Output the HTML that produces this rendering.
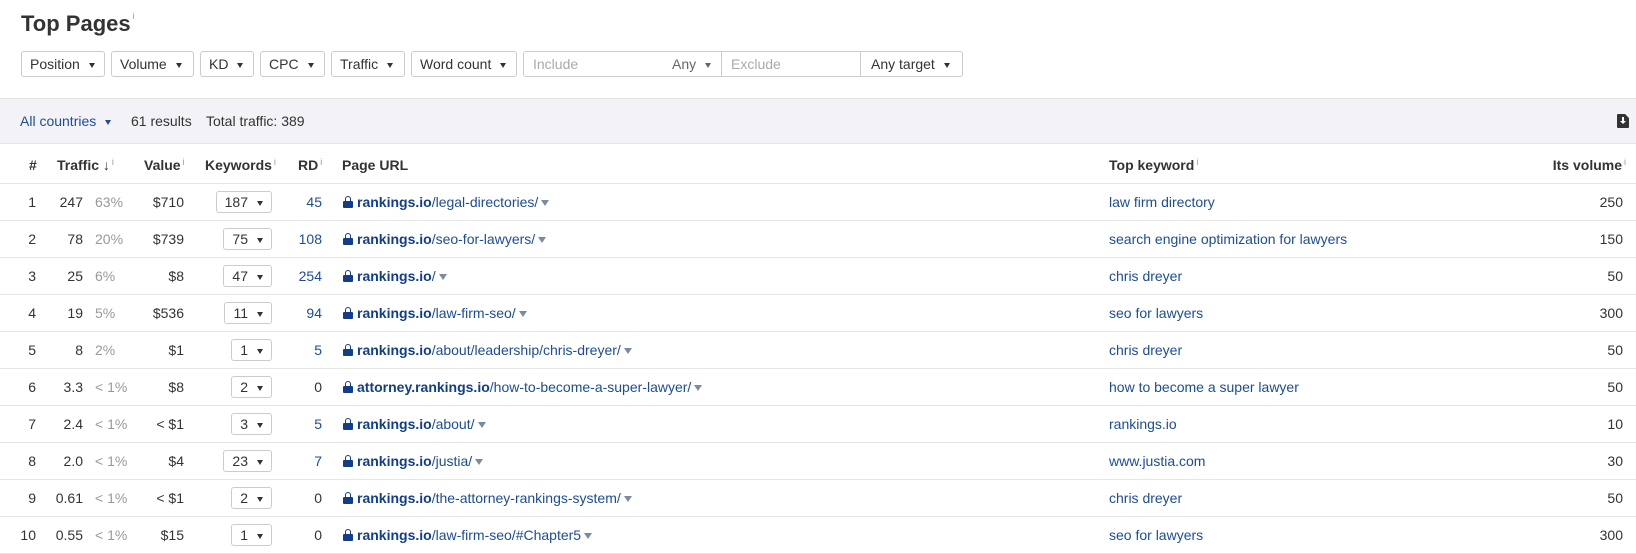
<!DOCTYPE html>
<html><head><meta charset="utf-8"><style>
*{margin:0;padding:0;box-sizing:border-box}
body{width:1636px;height:554px;background:#fff;font-family:"Liberation Sans",Arial,sans-serif;font-size:14px;color:#333;position:relative;overflow:hidden}
.a{position:absolute;white-space:nowrap}
h1{position:absolute;left:21px;top:11px;font-size:22px;font-weight:bold;color:#333}
.i{font-size:9px;color:#999;font-weight:normal;vertical-align:top;margin-left:2px}
.btn{position:absolute;top:51px;height:26px;border:1px solid #ccc;border-radius:3px;line-height:24px;padding-left:8px;color:#333;background:#fff}
.tri{display:inline-block;width:0;height:0;border-left:3.5px solid transparent;border-right:3.5px solid transparent;border-top:5px solid #333;vertical-align:middle;margin-left:9px}
.bar{position:absolute;left:0;right:0;top:98px;height:46px;background:#f3f3f7;border-top:1px solid #e6e6ea;border-bottom:1px solid #e6e6ea}
.hd{font-weight:bold;color:#333;top:157px}
.line{position:absolute;left:0;right:0;height:1px;background:#e5e5e5}
.r{text-align:right}
.blue{color:#1c4c9a}
.gray{color:#999}
.kw{position:absolute;height:22px;border:1px solid #ccc;border-radius:3px;line-height:20px;padding-left:8px;text-align:left;right:1364px}
.kw .tri{margin-left:9px;margin-right:8px;border-top-color:#333}
.url{color:#1c4c9a}
.url b{color:#113d8c}
.lock{display:inline-block;width:10px;height:12px;position:relative;vertical-align:-1px;margin-right:4px}
.lock:before{content:"";position:absolute;left:2px;top:0;width:4px;height:5px;border:1.6px solid #113d8c;border-bottom:none;border-radius:3px 3px 0 0}
.lock:after{content:"";position:absolute;left:0;top:5px;width:10px;height:7px;background:#113d8c;border-radius:1px}
.st{display:inline-block;width:0;height:0;border-left:4px solid transparent;border-right:4px solid transparent;border-top:6px solid #7b8aa3;margin-left:3px;vertical-align:middle}
</style></head><body>
<h1>Top Pages<span class="i">i</span></h1>
<div class="btn" style="left:21px;width:84px">Position<span class="tri"></span></div>
<div class="btn" style="left:111px;width:83px">Volume<span class="tri"></span></div>
<div class="btn" style="left:200px;width:54px">KD<span class="tri"></span></div>
<div class="btn" style="left:260px;width:65px">CPC<span class="tri"></span></div>
<div class="btn" style="left:331px;width:74px">Traffic<span class="tri"></span></div>
<div class="btn" style="left:411px;width:106px">Word count<span class="tri"></span></div>
<div class="btn" style="left:523px;width:440px;padding:0"></div>
<div class="a" style="left:533px;top:56px;color:#aaa">Include</div>
<div class="a" style="left:672px;top:56px;color:#666">Any<span class="tri" style="border-top-color:#666"></span></div>
<div class="a" style="left:721px;top:52px;width:1px;height:24px;background:#ccc"></div>
<div class="a" style="left:731px;top:56px;color:#aaa">Exclude</div>
<div class="a" style="left:860px;top:52px;width:1px;height:24px;background:#ccc"></div>
<div class="a" style="left:871px;top:56px;color:#333">Any target<span class="tri"></span></div>

<div class="bar"></div>
<div class="a blue" style="left:20px;top:113px">All countries<span class="tri" style="border-top-color:#1c4c9a"></span></div>
<div class="a" style="left:131px;top:113px">61 results</div>
<div class="a" style="left:206px;top:113px">Total traffic: 389</div>
<div class="a" style="left:1617px;top:114px;width:12px;height:14px;background:#333;border-radius:1px"><div style="position:absolute;left:5px;top:3px;width:2px;height:5px;background:#fff"></div><div style="position:absolute;left:3px;top:7px;border-left:3px solid transparent;border-right:3px solid transparent;border-top:3px solid #fff"></div><div style="position:absolute;right:0;top:0;border-left:4px solid #333;border-top:4px solid #f3f3f7"></div></div>

<div class="a hd" style="left:29px">#</div>
<div class="a hd" style="left:57px">Traffic ↓<span class="i">i</span></div>
<div class="a hd" style="left:144px">Value<span class="i">i</span></div>
<div class="a hd" style="left:205px">Keywords<span class="i">i</span></div>
<div class="a hd" style="left:298px">RD<span class="i">i</span></div>
<div class="a hd" style="left:342px">Page URL</div>
<div class="a hd" style="left:1109px">Top keyword<span class="i">i</span></div>
<div class="a hd" style="right:10px">Its volume<span class="i">i</span></div>
<div class="line" style="top:183px"></div>
<div id="rows"></div>
<script>
var d=[["1","247","63%","$710","187","45","rankings.io","/legal-directories/","law firm directory","250"],
["2","78","20%","$739","75","108","rankings.io","/seo-for-lawyers/","search engine optimization for lawyers","150"],
["3","25","6%","$8","47","254","rankings.io","/","chris dreyer","50"],
["4","19","5%","$536","11","94","rankings.io","/law-firm-seo/","seo for lawyers","300"],
["5","8","2%","$1","1","5","rankings.io","/about/leadership/chris-dreyer/","chris dreyer","50"],
["6","3.3","&lt; 1%","$8","2","0","attorney.rankings.io","/how-to-become-a-super-lawyer/","how to become a super lawyer","50"],
["7","2.4","&lt; 1%","&lt; $1","3","5","rankings.io","/about/","rankings.io","10"],
["8","2.0","&lt; 1%","$4","23","7","rankings.io","/justia/","www.justia.com","30"],
["9","0.61","&lt; 1%","&lt; $1","2","0","rankings.io","/the-attorney-rankings-system/","chris dreyer","50"],
["10","0.55","&lt; 1%","$15","1","0","rankings.io","/law-firm-seo/#Chapter5","seo for lawyers","300"]];
var h="";
d.forEach(function(r,i){var t=183+37*i,y=t+11;
h+='<div class="a r" style="right:1600px;top:'+y+'px">'+r[0]+'</div>';
h+='<div class="a r" style="right:1553px;top:'+y+'px">'+r[1]+'</div>';
h+='<div class="a gray" style="left:95px;top:'+y+'px">'+r[2]+'</div>';
h+='<div class="a r" style="right:1452px;top:'+y+'px">'+r[3]+'</div>';
h+='<div class="kw" style="top:'+(t+8)+'px">'+r[4]+'<span class="tri"></span></div>';
h+='<div class="a r" style="right:1314px;top:'+y+'px;color:'+(r[5]=="0"?"#333":"#1c4c9a")+'">'+r[5]+'</div>';
h+='<div class="a url" style="left:343px;top:'+y+'px"><span class="lock"></span><b>'+r[6]+'</b>'+r[7]+'<span class="st"></span></div>';
h+='<div class="a blue" style="left:1109px;top:'+y+'px">'+r[8]+'</div>';
h+='<div class="a r" style="right:13px;top:'+y+'px">'+r[9]+'</div>';
h+='<div class="line" style="top:'+(t+37)+'px"></div>';});
document.getElementById("rows").innerHTML=h;
</script>
</body></html>
